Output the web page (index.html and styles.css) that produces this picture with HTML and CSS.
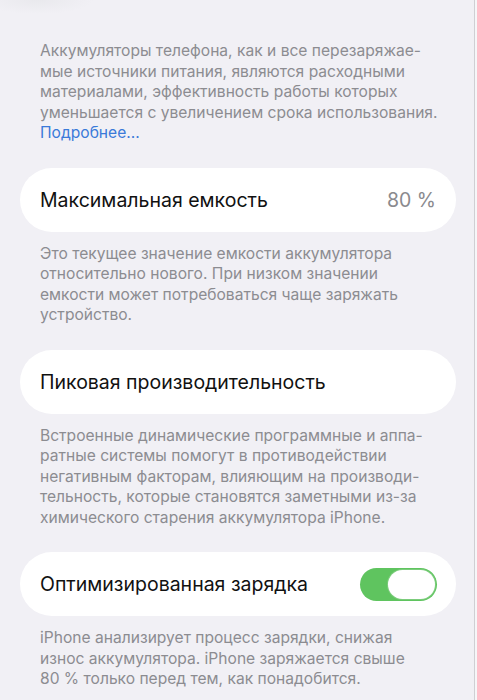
FILE: index.html
```html
<!DOCTYPE html>
<html lang="ru">
<head>
<meta charset="utf-8">
<link rel="stylesheet" href="styles.css">
</head>
<body>
<div class="page">
  <section class="group first">
    <p class="note">Аккумуляторы телефона, как и все перезаряжае-<br>мые источники питания, являются расходными<br>материалами, эффективность работы которых<br>уменьшается с увеличением срока использования.<br><span class="link">Подробнее…</span></p>
  </section>
  <section class="group">
    <div class="card">
      <span class="title">Максимальная емкость</span>
      <span class="value">80 %</span>
    </div>
    <p class="note">Это текущее значение емкости аккумулятора<br>относительно нового. При низком значении<br>емкости может потребоваться чаще заряжать<br>устройство.</p>
  </section>
  <section class="group">
    <div class="card">
      <span class="title">Пиковая производительность</span>
    </div>
    <p class="note">Встроенные динамические программные и аппа-<br>ратные системы помогут в противодействии<br>негативным факторам, влияющим на производи-<br>тельность, которые становятся заметными из-за<br>химического старения аккумулятора iPhone.</p>
  </section>
  <section class="group">
    <div class="card">
      <span class="title">Оптимизированная зарядка</span>
      <span class="toggle"><span class="knob"></span></span>
    </div>
    <p class="note">iPhone анализирует процесс зарядки, снижая<br>износ аккумулятора. iPhone заряжается свыше<br>80 % только перед тем, как понадобится.</p>
  </section>
</div>
</body>
</html>
```
FILE: styles.css
```css
html {
  margin: 0;
  background: #f6f6f8;
}
body {
  margin: 0;
  width: 477px;
  height: 700px;
  overflow: hidden;
  font-family: Inter, "Noto Sans", sans-serif;
}
.page {
  width: 475px;
  height: 700px;
  box-sizing: border-box;
  border-right: 1px solid #cfcfd3;
  padding: 41px 18px 0 20px;
  background:
    radial-gradient(ellipse 55px 14px at 38px 0px, #e9e9ed 0%, rgba(233,233,237,0) 100%),
    #f1f0f5;
  display: flex;
  flex-direction: column;
  gap: 24px;
}
.group {
  display: flex;
  flex-direction: column;
  gap: 12px;
}
.note {
  margin: 0;
  padding: 0 20px;
  font-size: 15.6px;
  line-height: 20.5px;
  color: #8c8c91;
  white-space: nowrap;
}
.link {
  color: #3a7ad9;
}
.card {
  height: 64px;
  box-sizing: border-box;
  background: #ffffff;
  border-radius: 32px;
  padding: 0 19px 0 20px;
  display: flex;
  align-items: center;
  justify-content: space-between;
}
.title {
  font-size: 19.5px;
  color: #111111;
}
.value {
  font-size: 19.5px;
  color: #8a8a8e;
  padding-right: 1px;
}
.toggle {
  width: 77px;
  height: 33px;
  box-sizing: border-box;
  border-radius: 17px;
  background: #5fc45f;
  padding: 2px;
  display: flex;
  justify-content: flex-end;
}
.knob {
  width: 47px;
  height: 29px;
  border-radius: 15px;
  background: #ffffff;
  box-shadow: 0 0 0 1px #7ccc7c;
}
```
